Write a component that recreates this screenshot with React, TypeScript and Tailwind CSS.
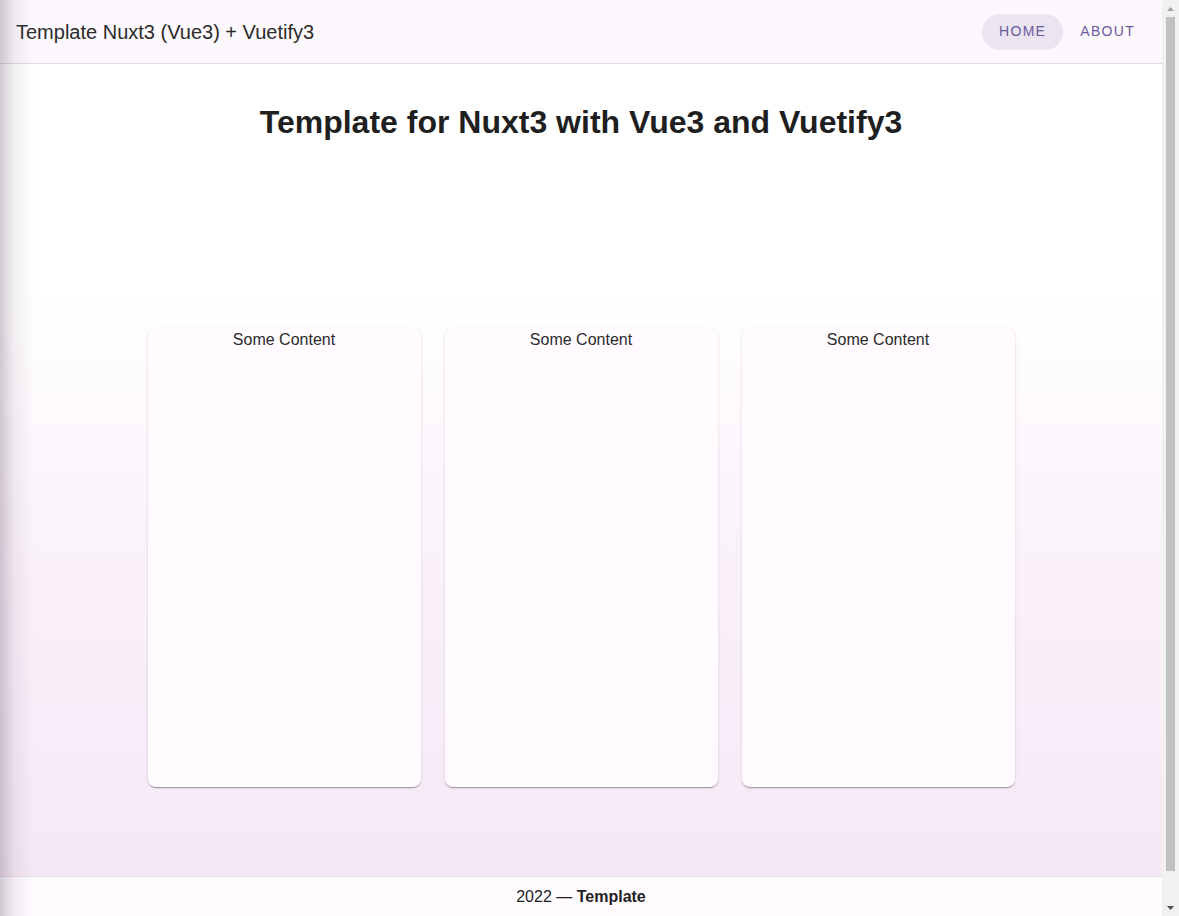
const NAV_ITEMS = [
  { label: "HOME", active: true },
  { label: "ABOUT", active: false },
];

const CARDS = ["Some Content", "Some Content", "Some Content"];

export default function App() {
  return (
    <div
      className="relative flex h-[916px] w-[1179px] overflow-hidden bg-white text-[#1f1f1f]"
      style={{ fontFamily: '"Liberation Sans", Arial, sans-serif' }}
    >
      <div className="flex min-w-0 flex-1 flex-col">
        <header className="flex h-16 shrink-0 items-center justify-between border-b border-[#dcdcdc] bg-[#fdf8fd] pl-4 pr-[10px]">
          <h1 className="text-[20px] text-[#2b2b2b]">Template Nuxt3 (Vue3) + Vuetify3</h1>
          <nav className="flex items-center">
            {NAV_ITEMS.map((item) => (
              <button
                key={item.label}
                className={`h-9 rounded-full px-[17px] text-[14px] tracking-[1.3px] text-[#6a5a9c] ${
                  item.active ? "bg-[#ebe4f1]" : ""
                }`}
              >
                {item.label}
              </button>
            ))}
          </nav>
        </header>

        <main className="flex flex-1 flex-col items-center bg-[linear-gradient(to_bottom,#ffffff_0%,#ffffff_28%,#faf1fa_62%,#f5e8f5_100%)]">
          <h2 className="mt-[34px] text-[32px] font-bold text-[#1f1f1f]">
            Template for Nuxt3 with Vue3 and Vuetify3
          </h2>
          <div className="mt-[182px] flex gap-6">
            {CARDS.map((text, i) => (
              <div
                key={i}
                className="flex h-[459px] w-[273px] justify-center rounded-lg bg-[#fffbff] shadow-[0_2px_1px_-1px_rgba(0,0,0,0.2),0_1px_1px_0_rgba(0,0,0,0.14),0_1px_3px_0_rgba(0,0,0,0.12)]"
              >
                <p className="text-[16px] text-[#2b2b2b]">{text}</p>
              </div>
            ))}
          </div>
        </main>

        <footer className="flex h-10 shrink-0 items-center justify-center border-t border-[#e4dde4] bg-[#fffbff] text-[16px] text-[#1f1f1f]">
          <span>
            2022 — <strong>Template</strong>
          </span>
        </footer>
      </div>

      {/* fake browser scrollbar */}
      <div className="flex w-[17px] shrink-0 flex-col items-center bg-[#f1f1f1]">
        <div className="flex h-[17px] items-center justify-center">
          <svg width="7" height="4" viewBox="0 0 7 4">
            <path d="M0 4 L3.5 0 L7 4 Z" fill="#a3a3a3" />
          </svg>
        </div>
        <div className="w-[9px] flex-1 bg-[#c1c1c1]" />
        <div className="h-[28px]" />
        <div className="flex h-[17px] items-center justify-center">
          <svg width="7" height="4" viewBox="0 0 7 4">
            <path d="M0 0 L3.5 4 L7 0 Z" fill="#505050" />
          </svg>
        </div>
      </div>

      {/* drawer edge shadow over the left side */}
      <div className="pointer-events-none absolute inset-y-0 left-0 w-[34px] bg-[linear-gradient(to_right,rgba(90,70,90,0.28),rgba(120,100,120,0.1)_40%,rgba(0,0,0,0))]" />
    </div>
  );
}
